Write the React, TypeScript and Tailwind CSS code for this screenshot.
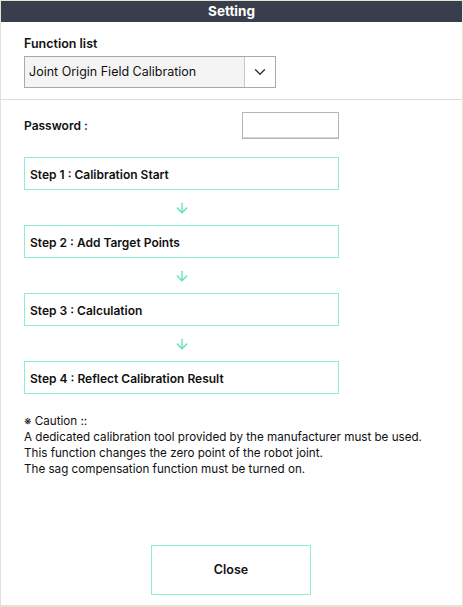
import { ChevronDown, ArrowDown } from 'lucide-react';

const steps = [
  'Step 1 : Calibration Start',
  'Step 2 : Add Target Points',
  'Step 3 : Calculation',
  'Step 4 : Reflect Calibration Result',
];

export default function App() {
  return (
    <div className="w-[463px] h-[607px] bg-[#e6e1d3] pt-px px-px pb-[2px] font-['Inter',sans-serif] text-[#111]">
      <div className="h-full bg-white flex flex-col">
        <div className="h-[21px] bg-[#393e4d] text-white text-[13.5px] font-bold flex items-center justify-center">
          Setting
        </div>

        <div className="px-[23px] pt-[13px] pb-[11px] border-b border-[#dcdcdc]">
          <div className="text-[12.5px] font-semibold leading-[18px]">Function list</div>
          <div className="mt-[3px] w-[252px] h-[32px] flex border border-[#a9a9a9] bg-[#f4f4f4]">
            <div className="flex-1 flex items-center pl-[4px] text-[12.5px] leading-none">
              Joint Origin Field Calibration
            </div>
            <div className="w-[31px] flex items-center justify-center border-l border-[#c8c8c8] bg-white">
              <ChevronDown size={18} strokeWidth={1.8} className="text-[#333]" />
            </div>
          </div>
        </div>

        <div className="px-[23px] pt-[12px] flex flex-col">
          <div className="flex items-center justify-between w-[315px]">
            <div className="text-[12px] font-semibold">Password :</div>
            <input className="w-[97px] h-[27px] border border-[#b5b5b5] shadow-[inset_0_-1px_0_#d5d5d5] bg-white outline-none" />
          </div>

          <div className="mt-[18px] flex flex-col w-[315px]">
            {steps.map((s, i) => (
              <div key={s} className="flex flex-col">
                {i > 0 && (
                  <div className="h-[35px] flex items-center justify-center">
                    <ArrowDown size={16} strokeWidth={2} className="text-[#62dfbb]" />
                  </div>
                )}
                <div className="h-[33px] border-[1.5px] border-[#8ceed2] flex items-center pl-[5px] pt-[2px] text-[12px] font-semibold">
                  {s}
                </div>
              </div>
            ))}
          </div>

          <div className="mt-[19px] text-[11.65px] leading-[16px] text-[#111]">
            <div>※ Caution ::</div>
            <div>A dedicated calibration tool provided by the manufacturer must be used.</div>
            <div>This function changes the zero point of the robot joint.</div>
            <div>The sag compensation function must be turned on.</div>
          </div>
        </div>

        <div className="flex-1" />
        <div className="flex justify-center pb-[10px]">
          <button className="ml-[-1px] w-[160px] h-[50px] border-[1.5px] border-[#8ceed2] text-[12.5px] font-semibold bg-white">
            Close
          </button>
        </div>
      </div>
    </div>
  );
}
